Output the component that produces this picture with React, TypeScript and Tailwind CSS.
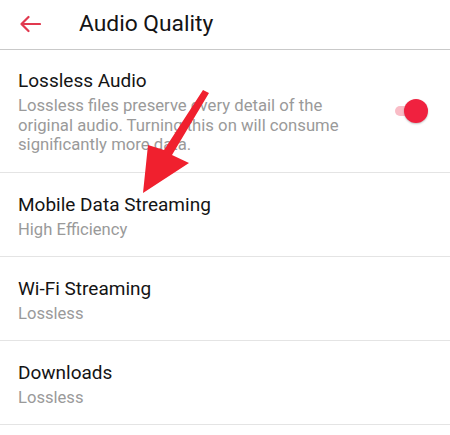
import React from 'react'

const rows = [
  { title: 'Mobile Data Streaming', value: 'High Efficiency' },
  { title: 'Wi-Fi Streaming', value: 'Lossless' },
  { title: 'Downloads', value: 'Lossless' },
]

export default function App() {
  return (
    <div className="relative w-[450px] h-[435px] overflow-hidden bg-white font-['Roboto',sans-serif]">
      <header className="flex h-[50px] items-center border-b-[1.5px] border-[#c9c9c9] pl-[19px]">
        <svg width="22" height="18" viewBox="0 0 22 18" className="mb-[2px]">
          <path d="M21 9H2.5M9.5 2L2.5 9l7 7" fill="none" stroke="#e1394f" strokeWidth="2.2" strokeLinecap="round" strokeLinejoin="round" />
        </svg>
        <h1 className="ml-[38px] mb-[2px] text-[22.8px] leading-[28px] text-[#141414]">Audio Quality</h1>
      </header>

      <div className="flex items-center border-b border-[#e4e4e4] pl-[18px] pr-[22px] pt-[19px] pb-[17px]">
        <div className="flex-1">
          <div className="text-[19px] leading-[24px] text-[#141414]">Lossless Audio</div>
          <p className="mt-[3px] text-[16.7px] leading-[19.5px] text-[#9a9a9a]">
            Lossless files preserve every detail of the
            <br />
            original audio. Turning this on will consume
            <br />
            significantly more data.
          </p>
        </div>
        <div className="relative ml-2 mb-[2px] h-[24px] w-[36px]">
          <div className="absolute left-[3px] top-[7px] h-[10px] w-[28px] rounded-full bg-[#f9bcc6]" />
          <div className="absolute right-0 top-0 h-[24px] w-[24px] rounded-full bg-[#f0213f] shadow-[0_1px_2px_rgba(0,0,0,0.25)]" />
        </div>
      </div>

      {rows.map((r) => (
        <div key={r.title} className="border-b border-[#e4e4e4] pl-[18px] pt-[20px] pb-[16px]">
          <div className="text-[19px] leading-[24px] text-[#141414]">{r.title}</div>
          <div className="mt-[3px] text-[16.6px] leading-[20px] text-[#9a9a9a]">{r.value}</div>
        </div>
      ))}

      <svg className="absolute left-0 top-0" width="450" height="435" viewBox="0 0 450 435">
        <polygon points="203,90 209,93 172,155 189,163 143,193 148,145 164,150" fill="#f0202e" />
      </svg>
    </div>
  )
}
